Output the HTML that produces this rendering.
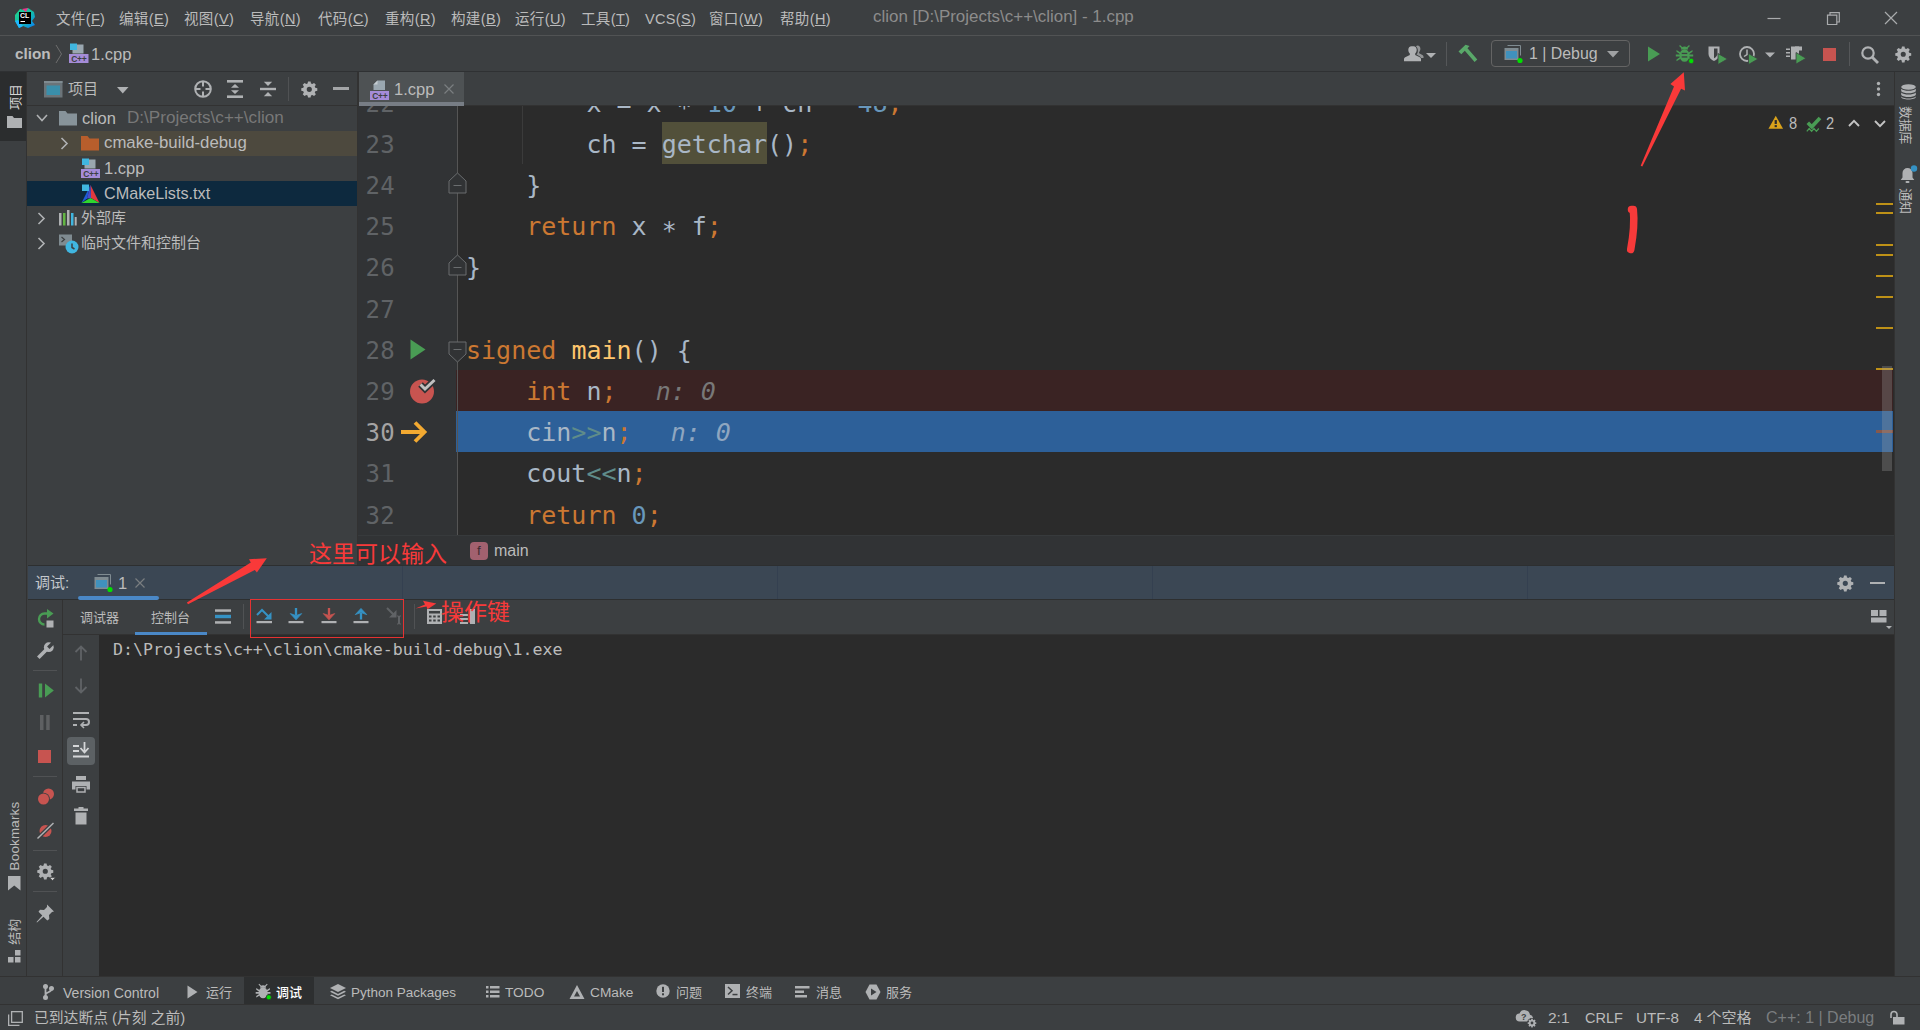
<!DOCTYPE html>
<html lang="zh-CN">
<head>
<meta charset="utf-8">
<title>clion - 1.cpp</title>
<style>
*{box-sizing:border-box;margin:0;padding:0}
html,body{width:1920px;height:1030px;overflow:hidden;background:#3c3f41}
body{position:relative;font-family:"Liberation Sans","Noto Sans CJK SC",sans-serif;font-size:15px;color:#bbbbbb}
.a{position:absolute}
.t{position:absolute;white-space:pre;line-height:20px;height:20px}
.l{font-size:16.5px}
.m{font-size:14.5px;letter-spacing:.35px}
.mono{font-family:"DejaVu Sans Mono","Liberation Mono","Noto Sans Mono CJK SC",monospace}
svg{position:absolute;overflow:visible}
/* regions */
#menubar{left:0;top:0;width:1920px;height:36px;background:#3c3f41;border-bottom:1px solid #515354}
#navbar{left:0;top:36px;width:1920px;height:36px;background:#3c3f41;border-bottom:1px solid #2f3133}
#lstripe{left:0;top:72px;width:27px;height:904px;background:#3c3f41;border-right:1px solid #323232}
#rstripe{left:1894px;top:72px;width:26px;height:904px;background:#3c3f41;border-left:1px solid #323232}
#proj{left:28px;top:72px;width:330px;height:494px;background:#3c3f41;border-right:1px solid #323232}
#tabs{left:358px;top:72px;width:1536px;height:34px;background:#3c3f41;border-bottom:1px solid #323232}
#editor{left:358px;top:106px;width:1536px;height:429px;background:#2b2b2b;overflow:hidden}
#gutter{left:0;top:0;width:99px;height:429px;background:#313335}
#crumbs{left:358px;top:535px;width:1536px;height:31px;background:#313335;border-top:1px solid #373a3c}
#dbghead{left:28px;top:565px;width:1866px;height:35px;background:#3b4754;border-bottom:1px solid #2d2f30;border-top:1px solid #2d2f30}
#dbgbar{left:63px;top:600px;width:1831px;height:35px;background:#3c3f41;border-bottom:1px solid #323232}
#dbgleft{left:28px;top:600px;width:35px;height:376px;background:#3c3f41;border-right:1px solid #323232}
#dbgleft2{left:63px;top:635px;width:36px;height:341px;background:#3c3f41}
#console{left:99px;top:635px;width:1795px;height:341px;background:#2b2b2b}
#bstripe{left:0;top:976px;width:1920px;height:28px;background:#3c3f41;border-top:1px solid #323232}
#status{left:0;top:1004px;width:1920px;height:26px;background:#3c3f41;border-top:1px solid #323232}
.row{position:absolute;left:0;width:329px;height:25px}
.code{position:absolute;left:108px;margin-top:1px;white-space:pre;font-size:25px;line-height:41px;height:41px;color:#a9b7c6}
.ln{position:absolute;left:7.5px;margin-top:1.6px;white-space:pre;font-size:24px;letter-spacing:.2px;line-height:41px;height:41px;color:#606366}
.k{color:#cc7832}.n{color:#6897bb}.f{color:#ffc66d}.o{color:#5f8c8a}.h{color:#787878;font-style:italic;margin-left:9px}
.red{color:#f73a3a}
</style>
</head>
<body>
<svg width="0" height="0" style="left:0;top:0"><defs>
<path id="gearp" fill="#afb1b3" fill-rule="evenodd" d="M7.600 0.500h2.800l.45 2.200c.5.160.98.360 1.430.6l1.870-1.240 1.980 1.980-1.240 1.870c.24.450.44.930.6 1.430l2.200.45v2.800l-2.200.45c-.16.500-.36.980-.6 1.430l1.240 1.870-1.980 1.980-1.870-1.240c-.45.240-.93.440-1.430.6l-.45 2.200H7.600l-.45-2.200c-.5-.16-.98-.36-1.430-.6l-1.870 1.240-1.980-1.980 1.240-1.870c-.24-.45-.44-.93-.6-1.430L.3 10.590v-2.800l2.200-.45c.16-.5.360-.98.600-1.430L1.870 4.040l1.980-1.980 1.870 1.240c.45-.24.930-.44 1.430-.6zM9 6.200a2.800 2.800 0 1 0 0 5.600 2.800 2.800 0 0 0 0-5.600z"/>
</defs></svg>
<!-- ===== REGIONS ===== -->
<div class="a" id="menubar"></div>
<div class="a" id="navbar"></div>
<div class="a" id="lstripe"></div>
<div class="a" id="rstripe"></div>
<div class="a" id="proj"></div>
<div class="a" id="tabs"></div>
<div class="a" id="editor"><div class="a" id="gutter"></div>
<div class="a" style="left:98px;top:264px;width:1437px;height:41px;background:#3a2323"></div>
<div class="a" style="left:98px;top:305px;width:1437px;height:41px;background:#2d6099"></div>
<div class="a" style="left:304px;top:16px;width:105px;height:42px;background:#52503a"></div>
<div class="a" style="left:99px;top:0;width:1px;height:429px;background:#555555"></div>
<div class="a" style="left:164px;top:0;width:1px;height:58px;background:#3b3b3b"></div>
<div class="ln mono" style="top:-24px;color:#606366">22</div>
<div class="code mono" style="top:-24px">        x = x <span style="position:relative;top:4px">*</span> <span class="n">10</span> + ch - <span class="n">48</span><span class="k">;</span></div>
<div class="ln mono" style="top:17px;color:#606366">23</div>
<div class="code mono" style="top:17px">        ch = getchar()<span class="k">;</span></div>
<div class="ln mono" style="top:58px;color:#606366">24</div>
<div class="code mono" style="top:58px">    }</div>
<div class="ln mono" style="top:99px;color:#606366">25</div>
<div class="code mono" style="top:99px">    <span class="k">return</span> x <span style="position:relative;top:4px">*</span> f<span class="k">;</span></div>
<div class="ln mono" style="top:140px;color:#606366">26</div>
<div class="code mono" style="top:140px">}</div>
<div class="ln mono" style="top:182px;color:#606366">27</div>
<div class="ln mono" style="top:223px;color:#606366">28</div>
<div class="code mono" style="top:223px"><span class="k">signed</span> <span class="f">main</span>() {</div>
<div class="ln mono" style="top:264px;color:#606366">29</div>
<div class="code mono" style="top:264px">    <span class="k">int</span> n<span class="k">;</span>  <span class="h">n: 0</span></div>
<div class="ln mono" style="top:305px;color:#a4a3a3">30</div>
<div class="code mono" style="top:305px">    cin<span class="o">&gt;&gt;</span>n<span class="k">;</span>  <span class="h" style="color:#8fa6c0">n: 0</span></div>
<div class="ln mono" style="top:346px;color:#606366">31</div>
<div class="code mono" style="top:346px">    cout<span class="o">&lt;&lt;</span>n<span class="k">;</span></div>
<div class="ln mono" style="top:388px;color:#606366">32</div>
<div class="code mono" style="top:388px">    <span class="k">return</span> <span class="n">0</span><span class="k">;</span></div>
<svg style="left:52px;top:233px" width="16" height="21" viewBox="0 0 16 21"><path d="M0.500 0.500L15.500 10.500 0.500 20.500z" fill="#499c54"/></svg>
<svg style="left:51px;top:271px" width="28" height="28" viewBox="0 0 28 28"><circle cx="13" cy="14.500" r="12" fill="#c85450"/><path d="M11.500 7.500l4.500 4.500 9.500-9" fill="none" stroke="#313335" stroke-width="6.500"/><path d="M11.500 7.500l4.500 4.500 9.500-9" fill="none" stroke="#c0c0c0" stroke-width="3"/></svg>
<svg style="left:43px;top:315px" width="27" height="22" viewBox="0 0 27 22" fill="none" stroke="#f2a931" stroke-width="3.800"><path d="M0 11h24M14 1.500L23.500 11l-9.500 9.500"/></svg>
<svg style="left:90px;top:66px" width="19" height="22" viewBox="0 0 19 22"><path d="M9.500 1L18 9v12H1V9z" fill="#313335" stroke="#6a6d6f" stroke-width="1"/><path d="M5.500 13.500h8" stroke="#6a6d6f" stroke-width="1"/></svg>
<svg style="left:90px;top:148px" width="19" height="22" viewBox="0 0 19 22"><path d="M9.500 1L18 9v12H1V9z" fill="#313335" stroke="#6a6d6f" stroke-width="1"/><path d="M5.500 13.500h8" stroke="#6a6d6f" stroke-width="1"/></svg>
<svg style="left:90px;top:235px" width="19" height="22" viewBox="0 0 19 22"><path d="M1 1h17v12L9.500 21 1 13z" fill="#313335" stroke="#6a6d6f" stroke-width="1"/><path d="M5.500 8.500h8" stroke="#6a6d6f" stroke-width="1"/></svg>
<div class="a" style="left:1518px;top:97px;width:17px;height:2px;background:#be9117"></div>
<div class="a" style="left:1518px;top:106px;width:17px;height:2px;background:#be9117"></div>
<div class="a" style="left:1518px;top:138px;width:17px;height:2px;background:#be9117"></div>
<div class="a" style="left:1518px;top:148px;width:17px;height:2px;background:#be9117"></div>
<div class="a" style="left:1518px;top:169px;width:17px;height:2px;background:#be9117"></div>
<div class="a" style="left:1518px;top:190px;width:17px;height:2px;background:#be9117"></div>
<div class="a" style="left:1518px;top:221px;width:17px;height:2px;background:#be9117"></div>
<div class="a" style="left:1518px;top:262px;width:17px;height:2px;background:#be9117"></div>
<div class="a" style="left:1518px;top:324px;width:17px;height:3px;background:#85594d"></div>
<div class="a" style="left:1524px;top:260px;width:10px;height:105px;background:rgba(166,166,166,.28)"></div>
<svg style="left:1409.500px;top:9.300px" width="15.500" height="14.500" viewBox="0 0 18 16"><path d="M9 0.500L17.500 15.500H0.500z" fill="#d9a21b"/><rect x="7.700" y="5.500" width="2.600" height="4.500" fill="#2b2b2b"/><rect x="7.700" y="11.300" width="2.600" height="2.400" fill="#2b2b2b"/></svg>
<div class="t l" style="left:1430.500px;top:7.500px;font-size:17px;transform:scaleX(.86);transform-origin:0 0">8</div>
<svg style="left:1448px;top:10px" width="16" height="17" viewBox="0 0 16 17" fill="none"><path d="M1.800 6.800l4 4L14 2" stroke="#499c54" stroke-width="3.600"/><path d="M0.800 15.300l2.400-2.800 2.400 2.800 2.400-2.800 2.400 2.800 2.400-2.800" stroke="#499c54" stroke-width="1.300"/></svg>
<div class="t l" style="left:1467.500px;top:7.500px;font-size:17px;transform:scaleX(.86);transform-origin:0 0">2</div>
<svg style="left:1489.500px;top:13px" width="12" height="8" viewBox="0 0 12 8" fill="none" stroke="#c4c4c4" stroke-width="1.900"><path d="M1 7l5-5.200L11 7"/></svg>
<svg style="left:1515.500px;top:14px" width="12" height="8" viewBox="0 0 12 8" fill="none" stroke="#c4c4c4" stroke-width="1.900"><path d="M1 1l5 5.200L11 1"/></svg>
</div>
<div class="a" id="crumbs"></div>
<div class="a" id="dbghead"></div>
<div class="a" id="dbgbar"></div>
<div class="a" id="dbgleft"></div>
<div class="a" id="dbgleft2"></div>
<div class="a" id="console"></div>
<div class="a" id="bstripe"></div>
<div class="a" id="status"></div>
<!-- ===== CONTENT ===== -->

<!-- menubar -->
<svg style="left:15px;top:8px" width="20" height="20" viewBox="0 0 20 20">
 <defs><linearGradient id="lg1" x1="0" y1="0" x2="1" y2="1"><stop offset="0" stop-color="#21d789"/><stop offset=".5" stop-color="#15c1a5"/><stop offset="1" stop-color="#087cfa"/></linearGradient></defs>
 <polygon points="0,7 5,1 9,2 13,0 19,4 20,9 17,13 20,17 13,20 8,18 4,20 0,13" fill="url(#lg1)"/>
 <polygon points="7,1 13,0 11,4" fill="#ed358c"/>
 <polygon points="0,13 4,20 8,18 3,12" fill="#1fb6ff"/>
 <rect x="4" y="4" width="12" height="12" fill="#000"/>
 <rect x="5.5" y="13" width="4.5" height="1" fill="#fff"/>
 <text x="5" y="10" font-family="Liberation Sans,sans-serif" font-weight="bold" font-size="7" fill="#fff">CL</text>
</svg>
<div class="t m" style="left:56px;top:9px">文件(<u>F</u>)</div>
<div class="t m" style="left:119px;top:9px">编辑(<u>E</u>)</div>
<div class="t m" style="left:184px;top:9px">视图(<u>V</u>)</div>
<div class="t m" style="left:250px;top:9px">导航(<u>N</u>)</div>
<div class="t m" style="left:318px;top:9px">代码(<u>C</u>)</div>
<div class="t m" style="left:385px;top:9px">重构(<u>R</u>)</div>
<div class="t m" style="left:451px;top:9px">构建(<u>B</u>)</div>
<div class="t m" style="left:515px;top:9px">运行(<u>U</u>)</div>
<div class="t m" style="left:581px;top:9px">工具(<u>T</u>)</div>
<div class="t m" style="left:645px;top:9px">VCS(<u>S</u>)</div>
<div class="t m" style="left:709px;top:9px">窗口(<u>W</u>)</div>
<div class="t m" style="left:780px;top:9px">帮助(<u>H</u>)</div>
<div class="t l" style="left:873px;top:7px;color:#8c8c8c;font-size:16.95px">clion [D:\Projects\c++\clion] - 1.cpp</div>
<!-- window controls -->
<svg style="left:1760px;top:8px" width="150" height="20" viewBox="0 0 150 20" fill="none" stroke="#a9abad" stroke-width="1.2">
 <path d="M7.5 10.5h13"/>
 <path d="M67.5 7.200h9.300v9.300h-9.300z M70 7.200v-2.500h9.300v9.300h-2.500"/>
 <path d="M125 4l12 12M137 4l-12 12"/>
</svg>
<!-- navbar -->
<div class="t l" style="left:15px;top:44px;font-weight:bold;font-size:15.3px">clion</div>
<svg style="left:55px;top:44px" width="8" height="20" viewBox="0 0 8 20" fill="none" stroke="#6e6e6e" stroke-width="1"><path d="M1 1l5.5 9L1 19"/></svg>
<svg class="cppicon" style="left:69px;top:43px" width="20" height="20" viewBox="0 0 20 20">
 <rect x="3.5" y="1.5" width="11" height="9" fill="#9aa7b0"/><rect x="1" y="0.5" width="7" height="6.5" fill="#40b6e0"/>
 <rect x="0" y="11" width="19.5" height="9" fill="#a58cd8"/>
 <text x="2.2" y="18.6" font-family="Liberation Sans,sans-serif" font-weight="bold" font-size="8.5" fill="#3c3f41" textLength="15.5">C++</text>
</svg>
<div class="t l" style="left:91px;top:44px">1.cpp</div>
<!-- nav toolbar -->
<svg style="left:1404px;top:45px" width="34" height="18" viewBox="0 0 34 18">
 <path d="M11 1.2c2 0 3.2 1.6 3.2 3.6 0 1.500-.6 2.900-1.500 3.800v1.300l4.600 2.300c.8.400 1.200 1.100 1.200 1.900v2.100H1.500v-2.100c0-.8.400-1.500 1.200-1.900l4.600-2.300V8.600C6.400 7.700 5.800 6.300 5.800 4.800c0-2 1.200-3.600 3.200-3.600z" fill="#afb1b3" transform="translate(-1.500,0)"/>
 <path d="M13.500 0.600c1.800 0 2.900 1.400 2.900 3.200 0 1.300-.5 2.500-1.300 3.300v1.100l3.300 1.700c.7.400 1.100 1 1.100 1.700v1.400h-2.500c-.1-.7-.6-1.400-1.400-1.800l-3.100-1.600c.9-1 1.400-2.400 1.400-3.900 0-1.800-.7-3.300-1.900-4.200.4-.5.900-.9 1.500-.9z" fill="#afb1b3" opacity=".75"/>
 <path d="M22 8h10l-5 5z" fill="#afb1b3"/>
</svg>
<div class="a" style="left:1446px;top:42px;width:1px;height:24px;background:#555759"></div>
<svg style="left:1457px;top:44px" width="21" height="19" viewBox="0 0 21 19">
 <path d="M1.500 7.500L8.500 0.800l4 1.200-2 2.300 9.800 11.200-2.700 2.600L7.800 6.800 4.300 10.200z" fill="#59a869"/>
</svg>
<div class="a" style="left:1491px;top:40px;width:139px;height:27px;border:1px solid #646464;border-radius:4px"></div>
<svg class="appicon" style="left:1504px;top:45px" width="19" height="18" viewBox="0 0 19 18">
 <path d="M3.500 0.500h13v10" fill="none" stroke="#7f8b91" stroke-width="1"/>
 <rect x="0.500" y="3" width="14" height="12" fill="#7f8b91"/><rect x="2" y="6" width="11" height="7.500" fill="#3592c4" opacity=".85"/>
 <circle cx="16" cy="15.500" r="2.600" fill="#00e000"/>
</svg>
<div class="t l" style="left:1529px;top:44px;font-size:15.9px">1 | Debug</div>
<svg style="left:1607px;top:51px" width="12" height="7" viewBox="0 0 12 7"><path d="M0 0h12L6 6.500z" fill="#9fa1a3"/></svg>
<!-- run -->
<svg style="left:1647px;top:46px" width="14" height="16" viewBox="0 0 14 16"><path d="M1 0.500L13 8 1 15.500z" fill="#499c54"/></svg>
<!-- bug -->
<svg id="bug1" style="left:1675px;top:44px" width="20" height="20" viewBox="0 0 20 20">
 <g fill="#499c54"><ellipse cx="9.500" cy="11.500" rx="5" ry="6.300"/><path d="M6 5.500a3.500 3 0 0 1 7 0z"/>
 <path d="M5 1l2.600 2.600-.9.900L4.100 1.900zM14 1l-2.600 2.600.9.900 2.600-2.600z"/>
 <path d="M1.500 6l4 2.500v2L1.500 7.800zM17.500 6l-4 2.500v2l4-2.700zM0.800 10.600h5v1.900h-5zM13.200 10.600h5v1.900h-5zM1.500 17.200l4-2.500v-2l-4 2.700zM17.500 17.200l-4-2.500v-2l4 2.700z"/></g>
 <rect x="6.700" y="8.800" width="5.600" height="1.300" fill="#3c3f41"/><rect x="6.700" y="12.300" width="5.600" height="1.300" fill="#3c3f41"/>
 <circle cx="16.200" cy="17" r="2.700" fill="#00e000" stroke="#3c3f41" stroke-width=".8"/>
</svg>
<!-- coverage -->
<svg style="left:1707px;top:45px" width="22" height="20" viewBox="0 0 22 20">
 <path d="M1.500 1.500h11v7c0 4-3 6.500-5.500 7.500C4.500 15 1.500 12.500 1.500 8.500z" fill="#afb1b3"/><path d="M7 3.500h3.500v5c0 2.200-1.500 3.800-3.500 4.800z" fill="#3c3f41"/>
 <path d="M11 8.500l9.500 5.500-9.500 5.500z" fill="#499c54" stroke="#3c3f41" stroke-width=".8"/>
</svg>
<!-- profile -->
<svg style="left:1738px;top:45px" width="40" height="20" viewBox="0 0 40 20">
 <circle cx="9" cy="9" r="7" fill="none" stroke="#afb1b3" stroke-width="1.800"/><path d="M9 4.500v5l-3 2" fill="none" stroke="#afb1b3" stroke-width="1.500"/>
 <path d="M10.500 8.500l9.500 5.500-9.500 5.500z" fill="#499c54" stroke="#3c3f41" stroke-width=".8"/>
 <path d="M27 7.500h10l-5 5z" fill="#afb1b3"/>
</svg>
<!-- run with -->
<svg style="left:1785px;top:45px" width="24" height="20" viewBox="0 0 24 20">
 <rect x="6" y="1.500" width="8" height="13" fill="#afb1b3"/><rect x="10" y="1.500" width="7" height="4" fill="#afb1b3"/>
 <rect x="1" y="3.500" width="4" height="1.500" fill="#afb1b3"/><rect x="1" y="7" width="4" height="1.500" fill="#afb1b3"/><rect x="1" y="10.500" width="4" height="1.500" fill="#afb1b3"/>
 <path d="M11 7.500l10 5.800-10 5.800z" fill="#499c54" stroke="#3c3f41" stroke-width=".8"/>
</svg>
<div class="a" style="left:1823px;top:48px;width:13px;height:13px;background:#c75450"></div>
<div class="a" style="left:1849px;top:42px;width:1px;height:24px;background:#555759"></div>
<svg style="left:1860px;top:45px" width="20" height="20" viewBox="0 0 20 20" fill="none" stroke="#afb1b3"><circle cx="8" cy="8" r="5.700" stroke-width="2.200"/><path d="M12 12l6 6" stroke-width="2.800"/></svg>
<svg class="gear" style="left:1895px;top:46px" width="16.500" height="16.500" viewBox="0 0 18 18"><use href="#gearp"/></svg>


<!-- left stripe -->
<div class="a" style="left:0;top:72px;width:26px;height:69px;background:#2b2d2e"></div>
<div class="t" style="left:6px;top:87px;width:20px;height:20px;line-height:20px;font-size:13px;color:#d4d4d4;transform:rotate(-90deg);transform-origin:10px 10px;letter-spacing:-.3px;text-align:center;width:20px"><span style="position:absolute;left:-6px;top:0;width:32px">项目</span></div>
<svg style="left:7px;top:116px" width="15" height="12" viewBox="0 0 15 12"><path d="M0 0h5.500l1.500 2H15v10H0z" fill="#afb1b3"/></svg>
<div class="t" style="left:-25px;top:826px;width:80px;height:20px;font-size:13.4px;transform:rotate(-90deg);text-align:center;font-family:'Liberation Sans',sans-serif;letter-spacing:.2px">Bookmarks</div>
<svg style="left:8px;top:876px" width="13" height="15" viewBox="0 0 13 15"><path d="M0 0h12.500v14.500L6.250 9.500 0 14.500z" fill="#afb1b3"/></svg>
<div class="t" style="left:-5px;top:922px;width:40px;height:20px;font-size:13px;transform:rotate(-90deg);text-align:center;letter-spacing:-.3px">结构</div>
<svg style="left:8px;top:950px" width="13" height="13" viewBox="0 0 13 13" fill="#afb1b3"><rect x="7" y="0" width="5.500" height="5.500"/><rect x="0" y="7" width="5.500" height="5.500"/><rect x="7" y="7" width="5.500" height="5.500"/></svg>
<!-- right stripe -->
<svg style="left:1900.500px;top:84px" width="15" height="15.500" viewBox="0 0 15 15.500" fill="#afb1b3"><ellipse cx="7.500" cy="3" rx="7.300" ry="2.800"/><path d="M.2 4.800c1.500 1.500 4.300 2 7.300 2s5.800-.5 7.300-2v2.400c-1.500 1.500-4.300 2-7.300 2s-5.800-.5-7.300-2zM.2 8.600c1.500 1.500 4.300 2 7.300 2s5.800-.5 7.300-2v2.400c-1.500 1.500-4.300 2-7.300 2s-5.800-.5-7.300-2zM.2 12.400c1.500 1.500 4.300 2 7.300 2s5.800-.5 7.300-2v.6c0 1.400-3.300 2.500-7.300 2.500S.2 14.400.2 13z"/></svg>
<div class="t" style="left:1880px;top:114.500px;width:50px;height:20px;font-size:13px;transform:rotate(90deg);text-align:center;letter-spacing:-.3px">数据库</div>
<svg style="left:1899.500px;top:165px" width="18" height="19" viewBox="0 0 18 19"><path d="M7.500 3a5 5 0 0 1 5 5v4.500l1.800 2.500H.7l1.800-2.500V8a5 5 0 0 1 5-5z" fill="#afb1b3"/><rect x="5.500" y="16" width="4" height="2" rx="1" fill="#afb1b3"/><circle cx="14" cy="3.500" r="3.200" fill="#3592c4"/></svg>
<div class="t" style="left:1885px;top:190.500px;width:40px;height:20px;font-size:13px;transform:rotate(90deg);text-align:center;letter-spacing:-.3px">通知</div>
<!-- project header -->
<svg style="left:44px;top:81px" width="19" height="17" viewBox="0 0 19 17"><rect x="0" y="0" width="18.500" height="16.500" fill="#6b7479"/><rect x="0" y="0" width="18.500" height="2" fill="#7f8b91"/><rect x="2.500" y="4.500" width="13.500" height="9.500" fill="#3a8fab"/></svg>
<div class="t" style="left:68px;top:79px">项目</div>
<svg style="left:117px;top:87px" width="12" height="7" viewBox="0 0 12 7"><path d="M0 0h11.500L5.750 6.500z" fill="#afb1b3"/></svg>
<svg style="left:194px;top:80px" width="18" height="18" viewBox="0 0 18 18" fill="none" stroke="#afb1b3" stroke-width="2"><circle cx="9" cy="9" r="7.800"/><path d="M9 1.500v5M9 11.500v5M1.500 9h5M11.500 9h5"/></svg>
<svg style="left:227px;top:80px" width="16" height="18" viewBox="0 0 16 18" fill="#afb1b3"><rect x="0" y="0" width="16" height="2.600"/><rect x="0" y="15.400" width="16" height="2.600"/><path d="M8 4l4 3.800H4zM8 14l4-3.800H4z"/></svg>
<svg style="left:260px;top:80px" width="16" height="18" viewBox="0 0 16 18" fill="#afb1b3"><rect x="0" y="7.800" width="16" height="2.400"/><path d="M8 6l4.200-4.200H3.800zM8 12l4.200 4.200H3.800z"/></svg>
<div class="a" style="left:288px;top:77px;width:1px;height:24px;background:#505254"></div>
<svg style="left:300.700px;top:80.700px" width="16.600" height="16.600" viewBox="0 0 18 18"><use href="#gearp"/></svg>
<div class="a" style="left:333px;top:87px;width:16px;height:3px;background:#a3a5a7"></div>
<div class="a" style="left:27px;top:105px;width:330px;height:1px;background:#323232"></div>
<!-- project tree -->
<div class="a" style="left:27px;top:131px;width:330px;height:25px;background:#4d493e"></div>
<div class="a" style="left:27px;top:181px;width:330px;height:25px;background:#0d293e"></div>
<svg style="left:36px;top:113px" width="12" height="10" viewBox="0 0 12 10" fill="none" stroke="#afb1b3" stroke-width="1.600"><path d="M1 2l5 5.500L11 2"/></svg>
<svg style="left:59px;top:111px" width="18" height="15" viewBox="0 0 18 15"><path d="M0 0h6.500l2 2.500H18V14.500H0z" fill="#87939a"/></svg>
<div class="t l" style="left:82px;top:108px">clion</div>
<div class="t l" style="left:127px;top:108px;color:#787878;font-size:17.1px">D:\Projects\c++\clion</div>
<svg style="left:60px;top:137px" width="9" height="13" viewBox="0 0 9 13" fill="none" stroke="#afb1b3" stroke-width="1.600"><path d="M1.500 1l5.500 5.500L1.500 12"/></svg>
<svg style="left:81px;top:136px" width="18" height="15" viewBox="0 0 18 15"><path d="M0 0h6.500l2 2.500H18V14.500H0z" fill="#b85e2c"/></svg>
<div class="t l" style="left:104px;top:133px;font-size:16.8px">cmake-build-debug</div>
<svg style="left:81px;top:158px" width="20" height="20" viewBox="0 0 20 20">
 <rect x="3.500" y="1.500" width="11" height="9" fill="#9aa7b0"/><rect x="1" y="0.500" width="7" height="6.500" fill="#40b6e0"/>
 <rect x="0" y="11" width="19" height="9" fill="#a58cd8"/>
 <text x="2.200" y="18.600" font-family="Liberation Sans,sans-serif" font-weight="bold" font-size="8.500" fill="#3c3f41" textLength="15.500">C++</text>
</svg>
<div class="t l" style="left:104px;top:158px">1.cpp</div>
<svg style="left:81px;top:184px" width="19" height="20" viewBox="0 0 19 20">
 <path d="M9.500 1L18.500 19l-8.500-5z" fill="#e0393e"/><path d="M9.500 1L0.500 19l5.500-4.500z" fill="#1f5bd8"/><path d="M0.500 19h18l-9-5z" fill="#2fd62f"/><path d="M9.500 1l.5 13-4 .5z" fill="#4a4cc8"/>
 <rect x="1" y="0.500" width="7" height="6.500" fill="#40b6e0"/>
</svg>
<div class="t l" style="left:104px;top:183px;font-size:16.2px">CMakeLists.txt</div>
<svg style="left:37px;top:212px" width="9" height="13" viewBox="0 0 9 13" fill="none" stroke="#afb1b3" stroke-width="1.600"><path d="M1.500 1l5.500 5.500L1.500 12"/></svg>
<svg style="left:59px;top:210px" width="18" height="16" viewBox="0 0 18 16"><rect x="0" y="3" width="2.500" height="12.500" fill="#afb1b3"/><rect x="4" y="3" width="2.500" height="12.500" fill="#62b543"/><rect x="8" y="0" width="2.500" height="15.500" fill="#afb1b3"/><rect x="12" y="3" width="2.500" height="12.500" fill="#40b6e0"/><rect x="15.700" y="7" width="2" height="8.500" fill="#afb1b3"/></svg>
<div class="t" style="left:81px;top:208px">外部库</div>
<svg style="left:37px;top:237px" width="9" height="13" viewBox="0 0 9 13" fill="none" stroke="#afb1b3" stroke-width="1.600"><path d="M1.500 1l5.500 5.500L1.500 12"/></svg>
<svg style="left:59px;top:234px" width="20" height="20" viewBox="0 0 20 20"><rect x="0" y="0.500" width="13" height="11" fill="#7f8b91"/><path d="M2.500 3l3 2.500-3 2.500" fill="none" stroke="#3c3f41" stroke-width="1.200"/><circle cx="13" cy="13" r="6.500" fill="#40b6e0"/><path d="M13 9.500v4l2.500 1.500" fill="none" stroke="#3c3f41" stroke-width="1.500"/></svg>
<div class="t" style="left:81px;top:233px">临时文件和控制台</div>
<!-- editor tabs -->
<div class="a" style="left:358px;top:72px;width:1px;height:34px;background:#323232"></div>
<div class="a" style="left:359px;top:72px;width:105px;height:33px;background:#4e5254"></div>
<div class="a" style="left:359px;top:102px;width:105px;height:4px;background:#777d85"></div>
<svg style="left:370px;top:80px" width="20" height="20" viewBox="0 0 20 20">
 <path d="M7.500 0.500H15V10H3.500V4.500z" fill="#9aa7b0"/><path d="M3.500 4.500L7.500 0.500V4.500z" fill="#c5cdd2"/>
 <rect x="0" y="11" width="19" height="9" fill="#a58cd8"/>
 <text x="2.200" y="18.600" font-family="Liberation Sans,sans-serif" font-weight="bold" font-size="8.500" fill="#3c3f41" textLength="15.500">C++</text>
</svg>
<div class="t l" style="left:394px;top:79px">1.cpp</div>
<svg style="left:444px;top:84px" width="10" height="10" viewBox="0 0 10 10" stroke="#7a7e80" stroke-width="1.200"><path d="M0.500 0.500l9 9M9.500 0.500l-9 9"/></svg>
<svg style="left:1876px;top:81px" width="5" height="16" viewBox="0 0 5 16" fill="#afb1b3"><circle cx="2.500" cy="2.500" r="1.700"/><circle cx="2.500" cy="8" r="1.700"/><circle cx="2.500" cy="13.500" r="1.700"/></svg>


<div class="a" style="left:470px;top:542px;width:18px;height:18px;border-radius:4px;background:#a2616f"></div>
<div class="t" style="left:470px;top:541px;width:18px;text-align:center;font-size:13.5px;color:#3f2c33;font-family:'Liberation Sans',sans-serif">f</div>
<div class="t l" style="left:494px;top:541px;font-size:16px">main</div>


<!-- debug header -->
<div class="t" style="left:35px;top:573px;color:#c4c8cc">调试:</div>
<svg style="left:94px;top:574px" width="19" height="18" viewBox="0 0 19 18">
 <path d="M3.500 0.500h13v10" fill="none" stroke="#7f8b91" stroke-width="1"/>
 <rect x="0.500" y="3" width="14" height="12" fill="#7f8b91"/><rect x="2" y="6" width="11" height="7.500" fill="#3592c4" opacity=".85"/>
 <circle cx="16" cy="15.500" r="2.600" fill="#00e000"/>
</svg>
<div class="t l" style="left:118px;top:573px">1</div>
<svg style="left:135px;top:578px" width="10" height="10" viewBox="0 0 10 10" stroke="#7a7e80" stroke-width="1.200"><path d="M0.500 0.500l9 9M9.500 0.500l-9 9"/></svg>
<div class="a" style="left:78px;top:596px;width:81px;height:4px;border-radius:2px;background:#4a88c7"></div>
<div class="a" style="left:1152px;top:566px;width:1px;height:33px;background:#344050"></div>
<div class="a" style="left:1527px;top:566px;width:1px;height:33px;background:#344050"></div>
<div class="a" style="left:402px;top:566px;width:1px;height:33px;background:#344050"></div>
<div class="a" style="left:777px;top:566px;width:1px;height:33px;background:#344050"></div>
<svg style="left:1836.700px;top:574.700px" width="16.600" height="16.600" viewBox="0 0 18 18"><use href="#gearp"/></svg>
<div class="a" style="left:1870px;top:582px;width:15px;height:2px;background:#afb1b3"></div>
<!-- debug toolbar -->
<div class="t" style="left:80px;top:608px;font-size:13px">调试器</div>
<div class="t" style="left:151px;top:608px;font-size:13px">控制台</div>
<div class="a" style="left:135px;top:632px;width:72px;height:3px;background:#4a88c7"></div>
<svg style="left:215px;top:609px" width="16" height="16" viewBox="0 0 16 16"><rect x="0" y="0.300" width="16" height="2.500" fill="#afb1b3"/><rect x="0" y="5.800" width="16" height="3.400" fill="#3592c4"/><rect x="0" y="12.200" width="16" height="2.500" fill="#afb1b3"/></svg>
<div class="a" style="left:243px;top:604px;width:1px;height:25px;background:#505254"></div>
<svg style="left:256px;top:608px" width="17" height="16" viewBox="0 0 17 16"><path d="M1 7l5-5 8 8" fill="none" stroke="#3592c4" stroke-width="2"/><path d="M15.500 4v7.500H8z" fill="#3592c4"/><rect x="0.500" y="13" width="15.500" height="2.200" fill="#afb1b3"/></svg>
<svg style="left:288px;top:608px" width="16" height="16" viewBox="0 0 16 16"><path d="M8 0v7" stroke="#3592c4" stroke-width="2.300"/><path d="M2.300 5.600L8 7.600l5.700-2L8 11.800z" fill="#3592c4" stroke="#3592c4" stroke-width=".8" stroke-linejoin="round"/><rect x="0.500" y="13" width="15" height="2.200" fill="#afb1b3"/></svg>
<svg style="left:321px;top:608px" width="16" height="16" viewBox="0 0 16 16"><path d="M8 0v7" stroke="#c75450" stroke-width="2.300"/><path d="M2.300 5.600L8 7.600l5.700-2L8 11.800z" fill="#c75450" stroke="#c75450" stroke-width=".8" stroke-linejoin="round"/><rect x="0.500" y="13" width="15" height="2.200" fill="#afb1b3"/></svg>
<svg style="left:353px;top:608px" width="16" height="16" viewBox="0 0 16 16"><path d="M8 5v6.500" stroke="#3592c4" stroke-width="2.300"/><path d="M2.300 6.600L8 4.600l5.700 2L8 0.400z" fill="#3592c4" stroke="#3592c4" stroke-width=".8" stroke-linejoin="round"/><rect x="0.500" y="13" width="15" height="2.200" fill="#afb1b3"/></svg>
<svg style="left:386px;top:607px" width="17" height="18" viewBox="0 0 17 18"><path d="M1 1l8 8" stroke="#606366" stroke-width="2"/><path d="M10.500 3v7.500H3z" fill="#606366"/><path d="M11 9h1.500v8H11M15 9h-1.500v8H15" fill="none" stroke="#606366" stroke-width="1"/></svg>
<div class="a" style="left:414px;top:604px;width:1px;height:25px;background:#505254"></div>
<svg style="left:427px;top:609px" width="15" height="15" viewBox="0 0 15 15"><rect x="0" y="0" width="15" height="15" fill="#afb1b3"/><rect x="2" y="2" width="11" height="2.500" fill="#3c3f41"/><g fill="#3c3f41"><rect x="2" y="6.500" width="2.500" height="2"/><rect x="6.200" y="6.500" width="2.500" height="2"/><rect x="10.500" y="6.500" width="2.500" height="2"/><rect x="2" y="10.500" width="2.500" height="2"/><rect x="6.200" y="10.500" width="2.500" height="2"/><rect x="10.500" y="10.500" width="2.500" height="2"/></g></svg>
<svg style="left:460px;top:609px" width="16" height="15" viewBox="0 0 16 15" fill="#afb1b3"><rect x="0" y="5" width="8" height="2"/><rect x="0" y="9" width="8" height="2"/><rect x="0" y="13" width="8" height="2"/><rect x="10" y="0" width="5" height="15"/></svg>
<svg style="left:1871px;top:610px" width="22" height="20" viewBox="0 0 22 20" fill="#afb1b3"><rect x="0" y="0" width="7" height="6"/><rect x="8.500" y="0" width="7" height="6"/><rect x="0" y="7.500" width="15.500" height="5"/><path d="M15 16h6l-3 3z"/></svg>
<!-- red box -->
<div class="a" style="left:250px;top:599px;width:154px;height:39px;border:1.300px solid #e53232"></div>
<!-- debug left toolbar -->
<svg style="left:36px;top:609px" width="19" height="19" viewBox="0 0 19 19"><path d="M13 4.500H8.500a5.500 5.500 0 1 0 0 11" fill="none" stroke="#499c54" stroke-width="2.400"/><path d="M11 0l6.500 4.500L11 9.500z" fill="#499c54"/><rect x="10.500" y="11.500" width="7" height="7" fill="#afb1b3"/></svg>
<svg style="left:36px;top:641px" width="19" height="19" viewBox="0 0 19 19"><path d="M2.300 16.700L10.500 8.500" stroke="#afb1b3" stroke-width="3.600" stroke-linecap="butt"/><circle cx="12.800" cy="6.200" r="4.900" fill="#afb1b3"/><path d="M12.300 6.700L18.500 0.500" stroke="#3c3f41" stroke-width="3.400"/></svg>
<div class="a" style="left:33px;top:670px;width:24px;height:1px;background:#505254"></div>
<svg style="left:38px;top:682px" width="16" height="17" viewBox="0 0 16 17" fill="#499c54"><rect x="0.800" y="1.500" width="3.400" height="14"/><path d="M7 1.500L15.800 8.500 7 15.500z"/></svg>
<svg style="left:40px;top:715px" width="10" height="16" viewBox="0 0 10 16" fill="#5e6062"><rect x="0" y="0" width="3.500" height="15"/><rect x="6.200" y="0" width="3.500" height="15"/></svg>
<div class="a" style="left:38px;top:750px;width:13px;height:13px;background:#c75450"></div>
<div class="a" style="left:33px;top:776px;width:24px;height:1px;background:#505254"></div>
<svg style="left:37px;top:788px" width="18" height="18" viewBox="0 0 18 18"><circle cx="11.500" cy="6" r="5.500" fill="#c75450"/><circle cx="6.500" cy="11" r="6.300" fill="#3c3f41"/><circle cx="6.500" cy="11" r="5.500" fill="#c75450"/></svg>
<svg style="left:37px;top:822px" width="18" height="18" viewBox="0 0 18 18"><circle cx="8.500" cy="9" r="6" fill="#c75450"/><path d="M0.500 16.500L16.500 1" stroke="#3c3f41" stroke-width="4"/><path d="M0.500 16.500L16.500 1" stroke="#afb1b3" stroke-width="1.500"/></svg>
<div class="a" style="left:33px;top:850px;width:24px;height:1px;background:#505254"></div>
<svg style="left:37px;top:863px" width="18" height="18" viewBox="0 0 18 18"><g transform="scale(.92)"><use href="#gearp"/></g><path d="M12.500 14.500h6l-3 3z" fill="#d0d0d0" stroke="#3c3f41" stroke-width=".6"/></svg>
<div class="a" style="left:33px;top:891px;width:24px;height:1px;background:#505254"></div>
<svg style="left:36px;top:904px" width="19" height="19" viewBox="0 0 19 19"><path d="M11 0.500l7 7-2 .5-3 3 .3 4-2 1.500-3.800-3.800L1 18.500l-.5-.5 5.800-6.500L2.500 7.700l1.500-2 4 .3 3-3z" fill="#afb1b3"/></svg>
<!-- debug 2nd toolbar -->
<svg style="left:74px;top:645px" width="14" height="16" viewBox="0 0 14 16" fill="none" stroke="#606366" stroke-width="1.800"><path d="M7 15.500V2M1.500 7L7 1.500 12.500 7"/></svg>
<svg style="left:74px;top:678px" width="14" height="16" viewBox="0 0 14 16" fill="none" stroke="#606366" stroke-width="1.800"><path d="M7 0.500V14M1.500 9L7 14.500 12.500 9"/></svg>
<svg style="left:73px;top:710.500px" width="17" height="16" viewBox="0 0 17 16" fill="none" stroke="#afb1b3" stroke-width="2"><path d="M0 2h16M0 8h13a2.700 2.700 0 0 1 0 6H9"/><path d="M0 14h4" /><path d="M11 11l-3 3 3 3" stroke-width="1.600"/></svg>
<div class="a" style="left:67px;top:737px;width:28px;height:28px;border-radius:4px;background:#5c6164"></div>
<svg style="left:73px;top:741.500px" width="17" height="16" viewBox="0 0 17 16" fill="none" stroke="#d4d6d8" stroke-width="2"><path d="M0 4h6M0 9h6M0 14.500h16"/><path d="M11.500 0v9M7.500 6l4 4.500 4-4.500" stroke-width="1.800"/></svg>
<svg style="left:72px;top:776px" width="18" height="17" viewBox="0 0 18 17" fill="#afb1b3"><rect x="4" y="0" width="10" height="4"/><path d="M0 5.500h18v8h-3.500v-3.500h-11v3.500H0z"/><rect x="5" y="11.500" width="8" height="4.500" fill="none" stroke="#afb1b3" stroke-width="1.500"/></svg>
<svg style="left:74px;top:807px" width="14" height="18" viewBox="0 0 14 18" fill="#afb1b3"><rect x="4.500" y="0" width="5" height="2"/><rect x="0" y="1.500" width="14" height="2.500"/><path d="M1.500 5.500h11v12h-11z"/></svg>
<!-- console -->
<div class="t mono" style="left:113px;top:640px;font-size:16.600px;color:#bbbbbb">D:\Projects\c++\clion\cmake-build-debug\1.exe</div>


<!-- bottom stripe -->
<div class="a" style="left:244px;top:977px;width:70px;height:27px;background:#2d2f30"></div>
<svg style="left:43px;top:984px" width="11" height="16" viewBox="0 0 11 16" fill="none" stroke="#afb1b3" stroke-width="1.800"><circle cx="2.500" cy="2.500" r="1.600" fill="#afb1b3"/><circle cx="2.500" cy="13.500" r="1.600" fill="#afb1b3"/><circle cx="8.500" cy="4.500" r="1.600" fill="#afb1b3"/><path d="M2.500 3v10M8.500 5c0 4-6 2.500-6 6"/></svg>
<div class="t" style="left:63px;top:983px;font-size:14.05px">Version Control</div>
<svg style="left:187px;top:985px" width="11" height="14" viewBox="0 0 11 14"><path d="M0.500 0.500L10.500 7 0.500 13.500z" fill="#afb1b3"/></svg>
<div class="t" style="left:206px;top:983px;font-size:13px">运行</div>
<svg style="left:255px;top:983px" width="17" height="17" viewBox="0 0 20 20">
 <g fill="#afb1b3"><ellipse cx="9.500" cy="11.500" rx="5.200" ry="6.500"/><path d="M6 5.500a3.500 3 0 0 1 7 0z"/>
 <path d="M5 1l2.600 2.600-.9.900L4.100 1.900zM14 1l-2.600 2.600.9.900 2.600-2.600z"/>
 <path d="M1.500 6l4 2.500v2L1.500 7.800zM17.500 6l-4 2.500v2l4-2.700zM0.800 10.600h5v1.900h-5zM13.200 10.600h5v1.900h-5zM1.500 17.200l4-2.500v-2l-4 2.700zM17.500 17.200l-4-2.500v-2l4 2.700z"/></g>
 <circle cx="16.200" cy="16.800" r="3" fill="#00e000" stroke="#2d2f30" stroke-width=".9"/>
</svg>
<div class="t" style="left:276px;top:983px;font-size:13px;color:#ffffff;font-weight:500">调试</div>
<svg style="left:330px;top:984px" width="16" height="16" viewBox="0 0 16 16" fill="#afb1b3"><path d="M8 0l8 4-8 4-8-4z"/><path d="M1.800 6.800L0 7.700l8 4 8-4-1.800-.9L8 9.900z"/><path d="M1.800 10.400L0 11.300l8 4 8-4-1.800-.9L8 13.500z"/></svg>
<div class="t" style="left:351px;top:983px;font-size:13.5px">Python Packages</div>
<svg style="left:486px;top:986px" width="14" height="12" viewBox="0 0 14 12" fill="#afb1b3"><rect x="0" y="0" width="2.500" height="2.500"/><rect x="4" y="0" width="9.500" height="2.500"/><rect x="0" y="4.500" width="2.500" height="2.500"/><rect x="4" y="4.500" width="9.500" height="2.500"/><rect x="0" y="9" width="2.500" height="2.500"/><rect x="4" y="9" width="9.500" height="2.500"/></svg>
<div class="t" style="left:505px;top:983px;font-size:13.7px">TODO</div>
<svg style="left:569px;top:985px" width="16" height="14" viewBox="0 0 16 14"><path d="M8 0l7.500 14h-15zM8 6l-3 5.500h6z" fill="#afb1b3" fill-rule="evenodd"/></svg>
<div class="t" style="left:590px;top:983px;font-size:13.7px">CMake</div>
<svg style="left:656px;top:984px" width="14" height="14" viewBox="0 0 14 14"><circle cx="7" cy="7" r="6.700" fill="#afb1b3"/><rect x="6" y="2.800" width="2" height="5.200" fill="#3c3f41"/><rect x="6" y="9.300" width="2" height="2" fill="#3c3f41"/></svg>
<div class="t" style="left:676px;top:983px;font-size:13px">问题</div>
<svg style="left:725px;top:984px" width="15" height="14" viewBox="0 0 15 14"><rect x="0" y="0" width="15" height="14" fill="#afb1b3"/><path d="M3 3l4 3.800L3 10.500" fill="none" stroke="#3c3f41" stroke-width="1.500"/><rect x="7.500" y="9.800" width="5" height="1.500" fill="#3c3f41"/></svg>
<div class="t" style="left:746px;top:983px;font-size:13px">终端</div>
<svg style="left:795px;top:986px" width="15" height="12" viewBox="0 0 15 12" fill="#afb1b3"><rect x="0" y="0" width="14.500" height="2.500"/><rect x="0" y="4.500" width="9" height="2.500"/><rect x="0" y="9" width="12" height="2.500"/></svg>
<div class="t" style="left:816px;top:983px;font-size:13px">消息</div>
<svg style="left:865px;top:984px" width="16" height="16" viewBox="0 0 16 16"><path d="M4.500 0.500h7L15.500 8l-4 7.500h-7L0.500 8z" fill="#afb1b3"/><path d="M6 4.500L11.500 8 6 11.500z" fill="#3c3f41"/></svg>
<div class="t" style="left:886px;top:983px;font-size:13px">服务</div>
<!-- status bar -->
<svg style="left:8px;top:1011px" width="15" height="15" viewBox="0 0 15 15" fill="none" stroke="#afb1b3" stroke-width="1.300"><rect x="3.600" y="0.650" width="10.700" height="10.700"/><path d="M0.650 3.500v10.800h10.800"/></svg>
<div class="t" style="left:34px;top:1008px;font-size:14.8px">已到达断点 (片刻 之前)</div>
<svg style="left:1515px;top:1009px" width="22" height="18" viewBox="0 0 22 18"><path d="M5 12.500a4 4 0 0 1-.5-8 5.500 5.500 0 0 1 10.500 1.200 3.500 3.500 0 0 1 .5 6.800z" fill="#afb1b3"/><text x="6" y="10.500" font-family="Liberation Sans,sans-serif" font-weight="bold" font-size="9" fill="#3c3f41">?</text><g transform="translate(12.500,9.500) scale(.5)"><circle cx="9" cy="9" r="10" fill="#3c3f41"/><use href="#gearp"/></g></svg>
<div class="t l" style="left:1548px;top:1008px;font-size:15.500px">2:1</div>
<div class="t l" style="left:1585px;top:1008px;font-size:14.500px">CRLF</div>
<div class="t l" style="left:1636px;top:1008px;font-size:15.200px">UTF-8</div>
<div class="t" style="left:1694px;top:1008px">4 个空格</div>
<div class="t l" style="left:1766px;top:1008px;font-size:16px;color:#7a7d7f">C++: 1 | Debug</div>
<svg style="left:1890px;top:1010px" width="15" height="15" viewBox="0 0 15 15"><rect x="3" y="7" width="11.500" height="7.500" fill="#afb1b3"/><path d="M1 8V4.500a3 3 0 0 1 6 0V7" fill="none" stroke="#afb1b3" stroke-width="1.600"/></svg>
<!-- annotations -->
<div class="t red" style="left:309px;top:540px;font-size:23px;line-height:28px;height:28px">这里可以输入</div>
<div class="t red" style="left:441px;top:598px;font-size:23px;line-height:28px;height:28px">操作键</div>
<svg style="left:0;top:0" width="1920" height="1030" viewBox="0 0 1920 1030">
 <path d="M186.900 602.500L250.800 562.500 249 559.300 266.800 558.200 256.900 572.400 254.800 570.100 188 604.200z" fill="#f93939"/>
 <path d="M1640.700 165.700L1674 86.400 1670.400 84 1683.800 72.300 1685 90.600 1681.100 88.700 1642.300 166.400z" fill="#f93939"/>
 <path d="M415.500 608.600L425 604.600l-2-3.900 13.300 2.800-8.800 5.700-1-2.800z" fill="#f73a3a"/>
 <path d="M1631.500 209.500l1.800 0c1.300 12 0 26-2.600 40" fill="none" stroke="#f73a3a" stroke-width="7.500" stroke-linecap="round" stroke-linejoin="round"/>
</svg>

<!-- ===== CONTENT6 ===== -->
</body>
</html>
